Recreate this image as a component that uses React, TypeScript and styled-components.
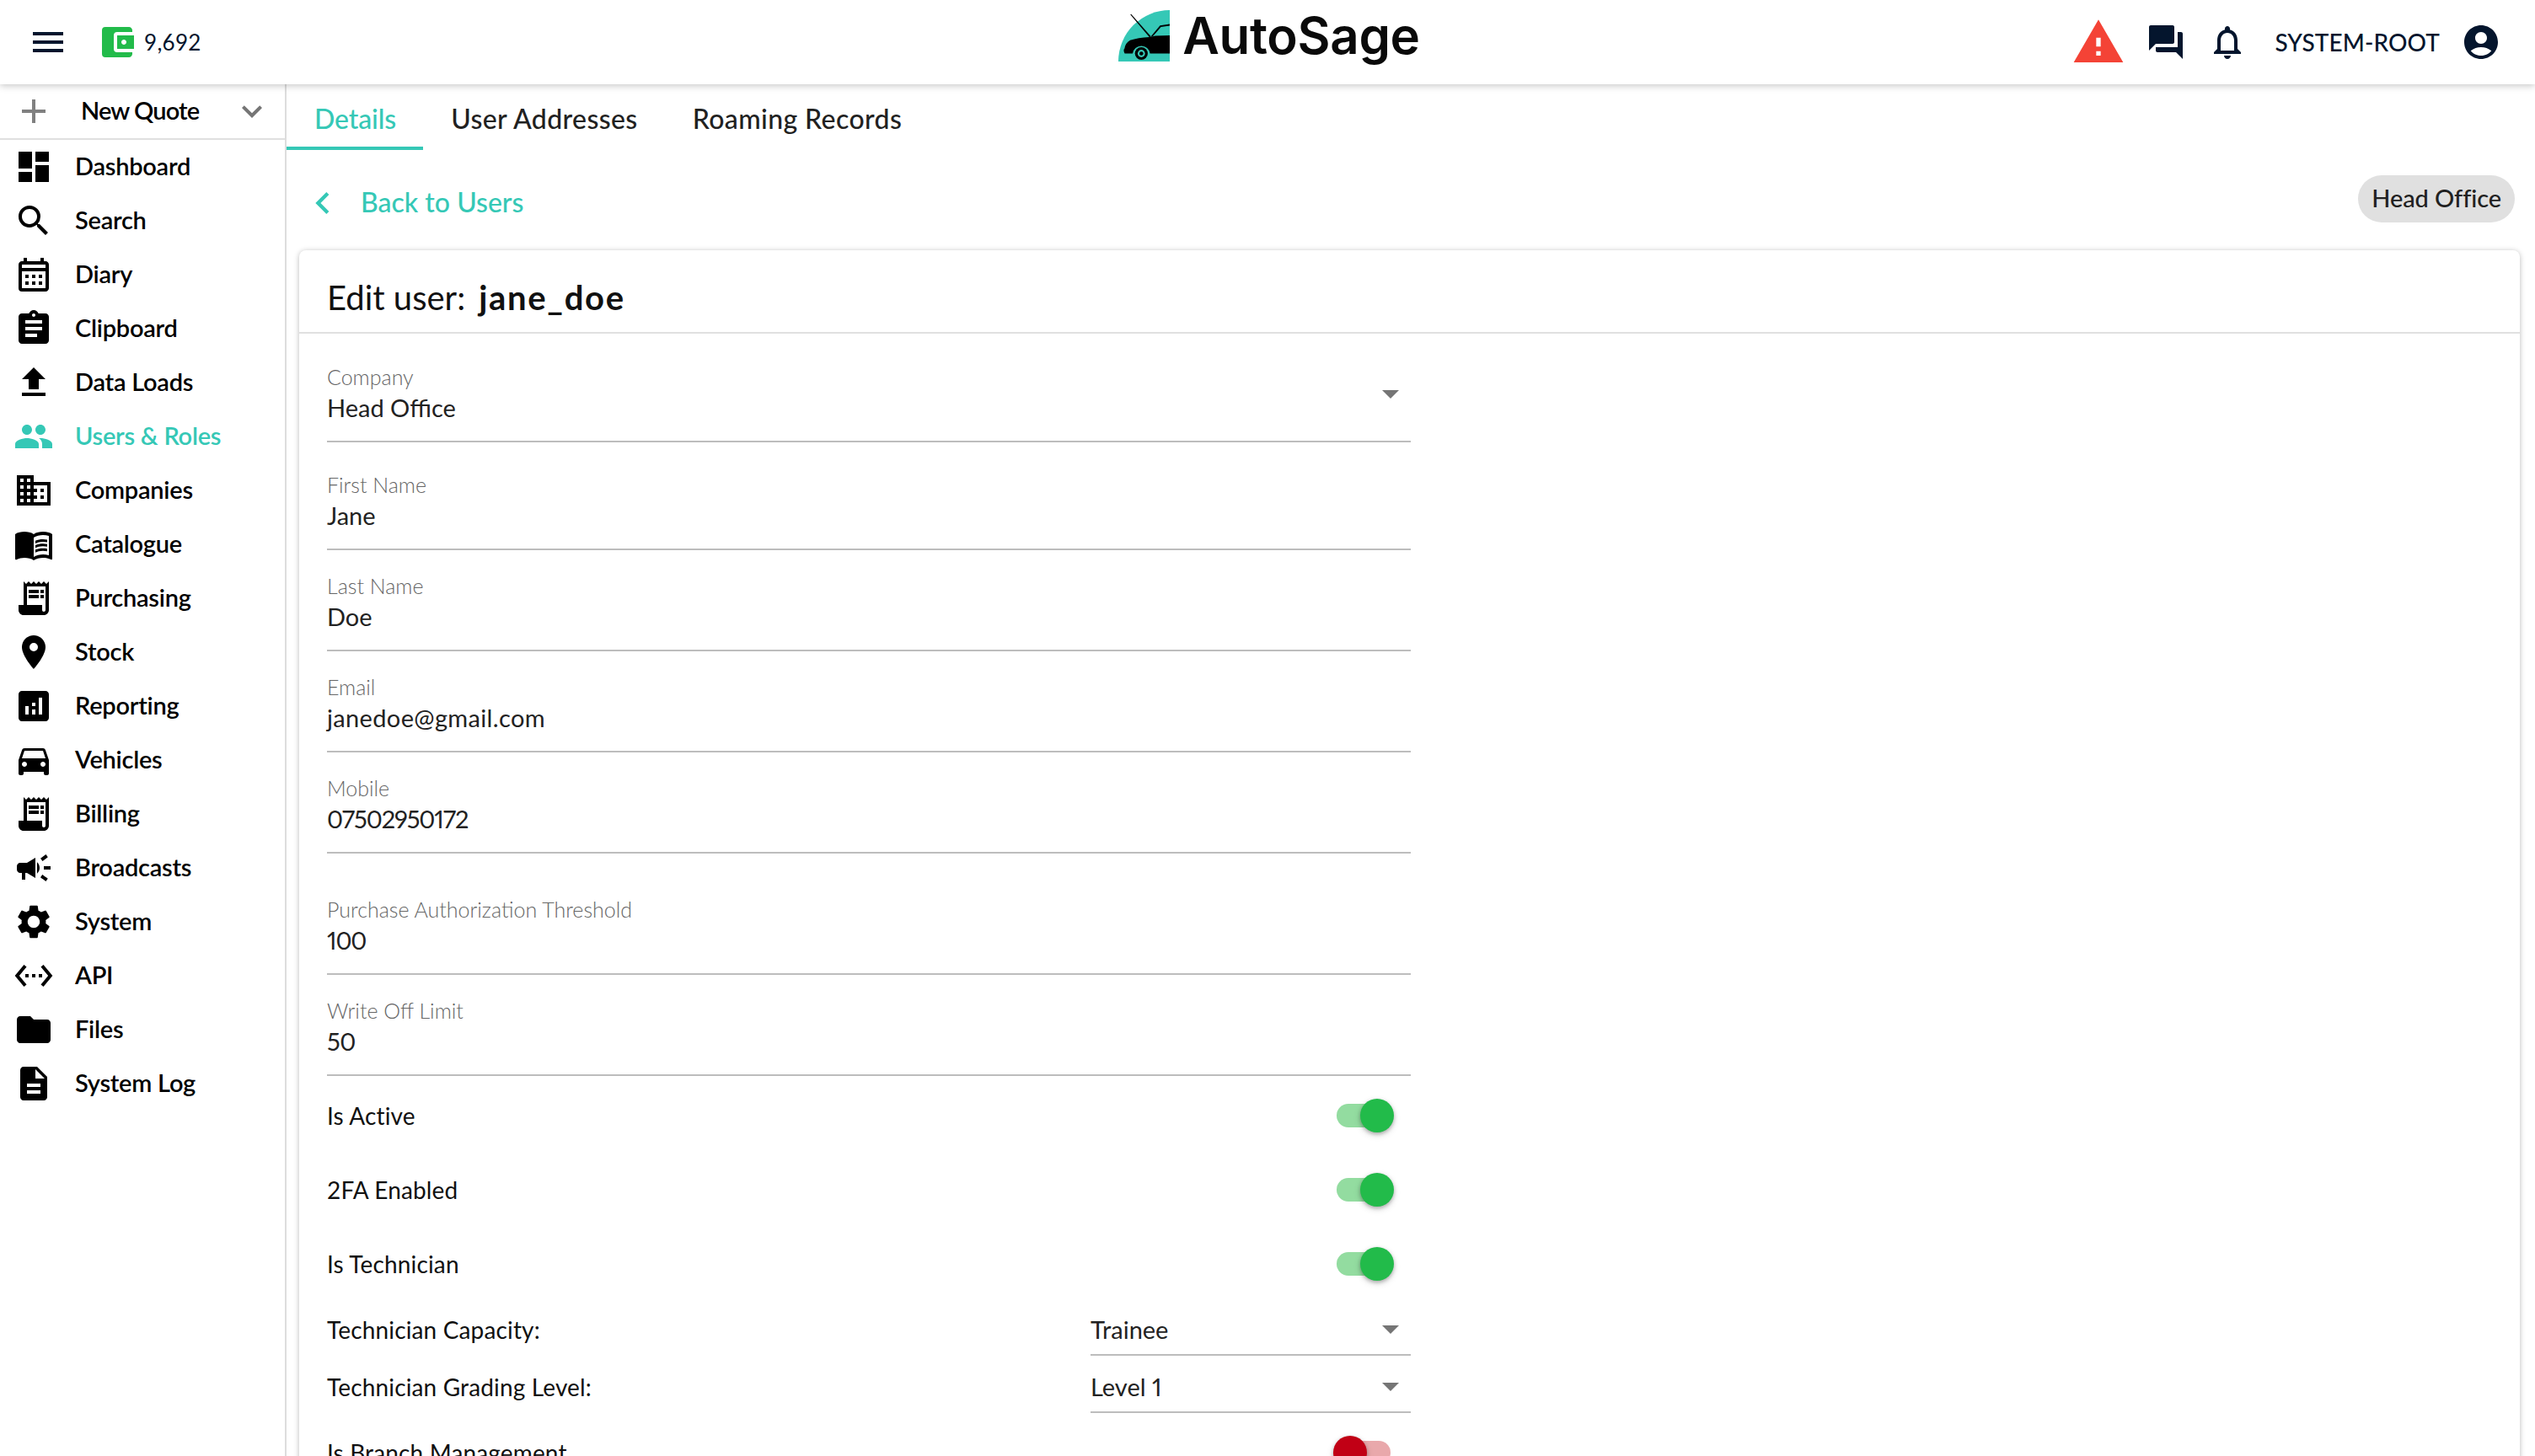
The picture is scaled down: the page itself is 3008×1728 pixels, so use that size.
import React, { FC, ReactNode } from "react";
import styled, { createGlobalStyle } from "styled-components";
import {
  MdAccountBalanceWallet,
  MdAccountCircle,
  MdAdd,
  MdAnalytics,
  MdArrowDropDown,
  MdAssignment,
  MdCampaign,
  MdChevronLeft,
  MdDashboard,
  MdDescription,
  MdDirectionsCar,
  MdDomain,
  MdExpandMore,
  MdFileUpload,
  MdFolder,
  MdForum,
  MdLocationOn,
  MdMenu,
  MdMenuBook,
  MdNotificationsNone,
  MdOutlineCalendarMonth,
  MdPeople,
  MdReceiptLong,
  MdSearch,
  MdSettings,
  MdSettingsEthernet,
  MdWarning,
} from "react-icons/md";

const teal = "#35c8b6";
const navy = "#04152d";
const green = "#22bb4a";
const font = `"Lato", "Open Sans", sans-serif`;

const GlobalStyle = createGlobalStyle`
  html, body {
    margin: 0;
    padding: 0;
    height: 100%;
    overflow: hidden;
    background: #fff;
    font-family: ${font};
  }
  #root {
    height: 100%;
  }
  * {
    box-sizing: border-box;
  }
`;

const Page = styled.div`
  height: 1728px;
  display: flex;
  flex-direction: column;
  overflow: hidden;
`;

const Header = styled.header`
  height: 100px;
  flex: none;
  display: grid;
  grid-template-columns: 1fr auto 1fr;
  align-items: center;
  padding: 0 33px;
  background: #fff;
  color: ${navy};
  position: relative;
  z-index: 2;
  box-shadow: 0 2px 8px rgba(0, 0, 0, 0.22);
`;

const HeaderLeft = styled.div`
  display: flex;
  align-items: center;
`;

const HeaderRight = styled.div`
  display: flex;
  align-items: center;
  justify-content: flex-end;
  padding-right: 7px;
`;

const IconBox = styled.span<{ $size?: number; $color?: string; $gap?: number }>`
  flex: none;
  display: flex;
  margin-left: ${(p) => p.$gap ?? 0}px;
  color: ${(p) => p.$color ?? "inherit"};
  svg {
    display: block;
    width: ${(p) => p.$size ?? 48}px;
    height: ${(p) => p.$size ?? 48}px;
  }
`;

const Balance = styled.span`
  margin-left: 8px;
  font-size: 26px;
  letter-spacing: 0.3px;
`;

const Logo = styled.div`
  display: flex;
  align-items: center;
  gap: 15px;
  height: 100%;
  margin: -16px 0 0 4px;
`;

const LogoMark = styled.svg`
  width: 61px;
  height: 61px;
  display: block;
`;

const LogoText = styled.span`
  font-family: "Inter", sans-serif;
  font-size: 60px;
  font-weight: 600;
  line-height: 1;
  color: #0a0a0a;
  letter-spacing: -0.3px;
`;

const UserName = styled.span`
  margin-left: 32px;
  font-size: 28px;
  font-weight: 500;
  letter-spacing: 0.1px;
`;

const Body = styled.div`
  flex: 1;
  min-height: 0;
  display: flex;
`;

const Sidebar = styled.nav`
  width: 340px;
  flex: none;
  border-right: 2px solid #ddd;
`;

const QuoteRow = styled.div`
  height: 66px;
  display: flex;
  align-items: center;
  padding-left: 16px;
  border-bottom: 2px solid #e0e0e0;
`;

const QuoteLabel = styled.span`
  margin-left: 32px;
  width: 179px;
  padding-bottom: 3px;
  font-size: 29px;
  font-weight: 600;
  letter-spacing: -0.9px;
  color: #000;
`;

const NavRow = styled.a<{ $active?: boolean }>`
  height: 64px;
  display: flex;
  align-items: center;
  padding-left: 16px;
  color: ${(p) => (p.$active ? teal : "#000")};
`;

const NavLabel = styled.span`
  margin-left: 25px;
  padding-bottom: 3px;
  font-size: 29px;
  font-weight: 600;
  letter-spacing: -0.25px;
`;

const Content = styled.main`
  flex: 1;
  min-width: 0;
  display: flex;
  flex-direction: column;
`;

const Tabs = styled.div`
  height: 78px;
  flex: none;
  display: flex;
`;

const Tab = styled.div<{ $active?: boolean }>`
  padding: 6px 32px 0 33px;
  display: flex;
  align-items: center;
  font-size: 32px;
  font-weight: 500;
  letter-spacing: ${(p) => (p.$active ? "-0.1px" : "0.4px")};
  color: ${(p) => (p.$active ? teal : "#212121")};
  border-bottom: 4px solid ${(p) => (p.$active ? teal : "transparent")};
`;

const BackRow = styled.div`
  height: 119px;
  flex: none;
  display: flex;
  justify-content: space-between;
  align-items: flex-start;
  padding: 30px 24px 0 17px;
`;

const BackLink = styled.a`
  margin-top: 7px;
  display: flex;
  align-items: center;
  gap: 19px;
  color: ${teal};
  font-size: 32px;
  font-weight: 500;
`;

const BackLabel = styled.span`
  padding-bottom: 3px;
`;

const Chip = styled.span`
  height: 56px;
  padding: 0 16px 3px;
  display: flex;
  align-items: center;
  border-radius: 28px;
  background: #e0e0e0;
  color: #212121;
  font-size: 29px;
  font-weight: 500;
  letter-spacing: -0.1px;
`;

const Card = styled.section`
  flex: 1;
  margin: 0 18px 0 15px;
  border-radius: 8px 8px 0 0;
  background: #fff;
  box-shadow: 0 1px 6px rgba(0, 0, 0, 0.28);
`;

const CardHeader = styled.div`
  height: 99px;
  padding: 14px 33px 0;
  display: flex;
  align-items: center;
  gap: 16px;
  border-bottom: 2px solid #e0e0e0;
  font-size: 40px;
  color: #111;
`;

const UserHandle = styled.strong`
  font-weight: 700;
  letter-spacing: 1.7px;
`;

const Form = styled.form`
  width: 1319px;
  padding: 34px 0 0 33px;
  display: flex;
  flex-direction: column;
`;

const Field = styled.div<{ $gap?: number }>`
  position: relative;
  margin-top: ${(p) => p.$gap ?? 0}px;
  padding-bottom: 19px;
  border-bottom: 2px solid #bdbdbd;
`;

const FieldLabel = styled.div`
  height: 34px;
  line-height: 34px;
  font-size: 25px;
  font-weight: 300;
  color: #666;
`;

const FieldValue = styled.div<{ $tracking?: number }>`
  height: 40px;
  line-height: 40px;
  font-size: 29px;
  font-weight: 400;
  font-variant-numeric: proportional-nums;
  letter-spacing: ${(p) => p.$tracking ?? 0}px;
  color: #222;
`;

const Arrow = styled.span`
  position: absolute;
  right: 0;
  top: 13px;
  color: #757575;
  svg {
    display: block;
    width: 48px;
    height: 48px;
  }
`;

const ToggleRow = styled.div<{ $gap?: number }>`
  height: 88px;
  flex: none;
  margin-top: ${(p) => p.$gap ?? 0}px;
  padding-right: 24px;
  display: flex;
  align-items: center;
  justify-content: space-between;
`;

const RowLabel = styled.span`
  font-size: 28px;
  font-weight: 400;
  color: #111;
  letter-spacing: 0.15px;
  line-height: 40px;
`;

const SwitchTrack = styled.span<{ $on: boolean }>`
  position: relative;
  width: 64px;
  height: 28px;
  border-radius: 14px;
  background: ${(p) => (p.$on ? "#93dca0" : "#e9a8ab")};
`;

const SwitchThumb = styled.span<{ $on: boolean }>`
  position: absolute;
  top: -6px;
  ${(p) => (p.$on ? "right: -4px;" : "left: -4px;")}
  width: 40px;
  height: 40px;
  border-radius: 50%;
  background: ${(p) => (p.$on ? green : "#c10015")};
  box-shadow: 0 2px 4px rgba(0, 0, 0, 0.25), 0 3px 8px rgba(0, 0, 0, 0.14);
`;

const SelectRow = styled.div<{ $gap: number }>`
  margin-top: ${(p) => p.$gap}px;
  display: flex;
  justify-content: space-between;
  align-items: flex-start;
`;

const SelectBox = styled.div`
  position: relative;
  width: 380px;
  padding-bottom: 9px;
  border-bottom: 2px solid #bdbdbd;
  font-size: 29px;
  font-weight: 400;
  line-height: 40px;
  font-variant-numeric: proportional-nums;
  color: #222;
`;

const SelectArrow = styled(Arrow)`
  top: -5px;
`;

const Switch: FC<{ on: boolean }> = ({ on }) => (
  <SwitchTrack $on={on}>
    <SwitchThumb $on={on} />
  </SwitchTrack>
);

interface NavEntry {
  label: string;
  icon: ReactNode;
  active?: boolean;
}

const navItems: NavEntry[] = [
  { label: "Dashboard", icon: <MdDashboard /> },
  { label: "Search", icon: <MdSearch /> },
  { label: "Diary", icon: <MdOutlineCalendarMonth /> },
  { label: "Clipboard", icon: <MdAssignment /> },
  { label: "Data Loads", icon: <MdFileUpload /> },
  { label: "Users & Roles", icon: <MdPeople />, active: true },
  { label: "Companies", icon: <MdDomain /> },
  { label: "Catalogue", icon: <MdMenuBook /> },
  { label: "Purchasing", icon: <MdReceiptLong /> },
  { label: "Stock", icon: <MdLocationOn /> },
  { label: "Reporting", icon: <MdAnalytics /> },
  { label: "Vehicles", icon: <MdDirectionsCar /> },
  { label: "Billing", icon: <MdReceiptLong /> },
  { label: "Broadcasts", icon: <MdCampaign /> },
  { label: "System", icon: <MdSettings /> },
  { label: "API", icon: <MdSettingsEthernet /> },
  { label: "Files", icon: <MdFolder /> },
  { label: "System Log", icon: <MdDescription /> },
];

const fields = [
  { label: "Company", value: "Head Office", gap: 0, select: true },
  { label: "First Name", value: "Jane", gap: 33 },
  { label: "Last Name", value: "Doe", gap: 25 },
  { label: "Email", value: "janedoe@gmail.com", gap: 25, tracking: 0.35 },
  { label: "Mobile", value: "07502950172", gap: 25, tracking: -1.1 },
  { label: "Purchase Authorization Threshold", value: "100", gap: 49, tracking: -1.1 },
  { label: "Write Off Limit", value: "50", gap: 25, tracking: -0.5 },
];

const AutoSageMark: FC = () => (
  <LogoMark viewBox="0 0 61 61">
    <path d="M61 0A61 61 0 0 0 0 61H61Z" fill={teal} />
    <path d="M14.4 5.4L15 4.6L38.5 31L37 32.2Z" fill="#000" />
    <path d="M38 32L49.5 18.2L61 16.4V18.6L50.6 20L41 31Z" fill="#000" />
    <path
      d="M61 30V51.5H37.6A10.4 10.4 0 0 0 17 51.5H7.6C6.2 49 6 46.6 7.4 45.4C7.8 42 10 38 14 35.8C20 33.8 28 32.6 37 32L44 30.4Z"
      fill="#000"
    />
    <circle cx="27.3" cy="51.5" r="7.6" fill="#000" />
    <circle cx="27.3" cy="51.5" r="4.4" fill={teal} />
    <circle cx="27.3" cy="51.5" r="2.3" fill="#000" />
  </LogoMark>
);

const App: FC = () => (
  <Page>
    <GlobalStyle />
    <Header>
      <HeaderLeft>
        <IconBox>
          <MdMenu />
        </IconBox>
        <IconBox $color={green} $gap={34}>
          <MdAccountBalanceWallet />
        </IconBox>
        <Balance>9,692</Balance>
      </HeaderLeft>
      <Logo>
        <AutoSageMark />
        <LogoText>AutoSage</LogoText>
      </Logo>
      <HeaderRight>
        <IconBox $size={64} $color="#f44336">
          <MdWarning />
        </IconBox>
        <IconBox $gap={24}>
          <MdForum />
        </IconBox>
        <IconBox $gap={25}>
          <MdNotificationsNone />
        </IconBox>
        <UserName>SYSTEM-ROOT</UserName>
        <IconBox $gap={25}>
          <MdAccountCircle />
        </IconBox>
      </HeaderRight>
    </Header>
    <Body>
      <Sidebar>
        <QuoteRow>
          <IconBox $color="#808080">
            <MdAdd />
          </IconBox>
          <QuoteLabel>New Quote</QuoteLabel>
          <IconBox $color="#757575">
            <MdExpandMore />
          </IconBox>
        </QuoteRow>
        {navItems.map((item) => (
          <NavRow key={item.label} $active={item.active}>
            <IconBox>{item.icon}</IconBox>
            <NavLabel>{item.label}</NavLabel>
          </NavRow>
        ))}
      </Sidebar>
      <Content>
        <Tabs>
          <Tab $active>Details</Tab>
          <Tab>User Addresses</Tab>
          <Tab>Roaming Records</Tab>
        </Tabs>
        <BackRow>
          <BackLink>
            <IconBox $size={52}>
              <MdChevronLeft />
            </IconBox>
            <BackLabel>Back to Users</BackLabel>
          </BackLink>
          <Chip>Head Office</Chip>
        </BackRow>
        <Card>
          <CardHeader>
            <span>Edit user:</span>
            <UserHandle>jane_doe</UserHandle>
          </CardHeader>
          <Form>
            {fields.map((field) => (
              <Field key={field.label} $gap={field.gap}>
                <FieldLabel>{field.label}</FieldLabel>
                <FieldValue $tracking={field.tracking}>{field.value}</FieldValue>
                {field.select && (
                  <Arrow>
                    <MdArrowDropDown />
                  </Arrow>
                )}
              </Field>
            ))}
            <ToggleRow $gap={3}>
              <RowLabel>Is Active</RowLabel>
              <Switch on />
            </ToggleRow>
            <ToggleRow>
              <RowLabel>2FA Enabled</RowLabel>
              <Switch on />
            </ToggleRow>
            <ToggleRow>
              <RowLabel>Is Technician</RowLabel>
              <Switch on />
            </ToggleRow>
            <SelectRow $gap={14}>
              <RowLabel>Technician Capacity:</RowLabel>
              <SelectBox>
                Trainee
                <SelectArrow>
                  <MdArrowDropDown />
                </SelectArrow>
              </SelectBox>
            </SelectRow>
            <SelectRow $gap={17}>
              <RowLabel>Technician Grading Level:</RowLabel>
              <SelectBox>
                Level 1
                <SelectArrow>
                  <MdArrowDropDown />
                </SelectArrow>
              </SelectBox>
            </SelectRow>
            <ToggleRow $gap={3}>
              <RowLabel>Is Branch Management</RowLabel>
              <Switch on={false} />
            </ToggleRow>
          </Form>
        </Card>
      </Content>
    </Body>
  </Page>
);

export default App;
